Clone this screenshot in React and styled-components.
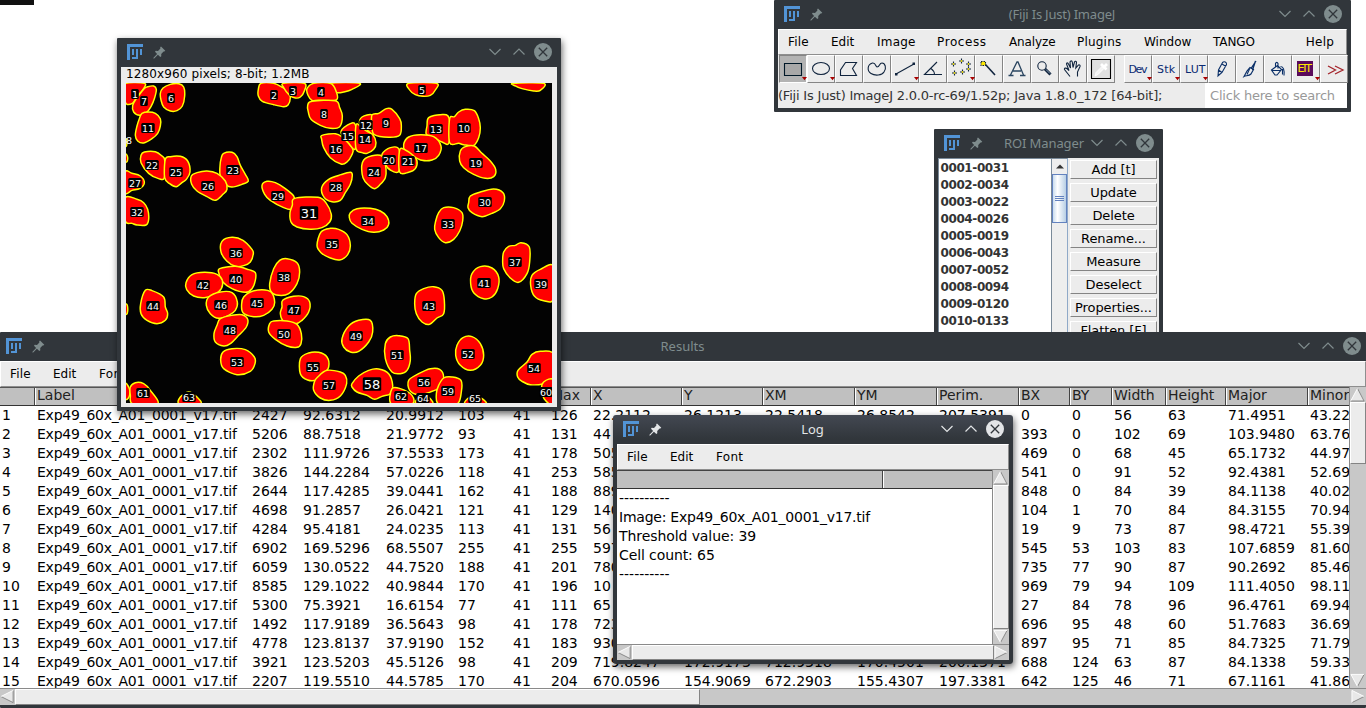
import React from "react";
import styled, { createGlobalStyle, css } from "styled-components";

const GlobalStyle = createGlobalStyle`
  * { box-sizing: border-box; }
  html, body { margin: 0; padding: 0; background: #fff; overflow: hidden; }
`;

const Desktop = styled.div`
  position: relative;
  width: 1366px;
  height: 708px;
  overflow: hidden;
  background: #fff;
  color: #000;
  font-family: "DejaVu Sans", sans-serif;
  font-size: 13px;
  white-space: pre;
`;

const ScreenCorner = styled.div`
  width: 34px;
  height: 5px;
  background: #111;
`;

/* ---------- window frame ---------- */

const Frame = styled.section`
  position: absolute;
  left: ${(p) => p.$x}px;
  top: ${(p) => p.$y}px;
  width: ${(p) => p.$w}px;
  height: ${(p) => p.$h}px;
  display: flex;
  flex-direction: column;
  padding: 0 ${(p) => p.$edge ?? 4}px ${(p) => p.$bottom ?? 4}px;
  background: #31363b;
  border-radius: ${(p) => (p.$active ? 3 : 1)}px;
  box-shadow: ${(p) => (p.$shadow ? "1px 3px 7px rgba(0, 0, 0, 0.6)" : "none")};
  ${(p) => p.$active && css`background: linear-gradient(#434852 0, #31363b 24px);`}
`;

const TitleBar = styled.header`
  flex: 0 0 29px;
  display: flex;
  align-items: center;
  padding: 0 ${(p) => p.$right ?? 5}px 1px ${(p) => p.$left ?? 6}px;
  color: ${(p) => (p.$active ? "#e3e5e7" : "#7f8c8d")};
`;

const TitleText = styled.h1`
  flex: 1;
  margin: 0;
  padding-left: ${(p) => p.$shift ?? 0}px;
  text-align: center;
  font: 400 13px/28px "Noto Sans", sans-serif;
  letter-spacing: ${(p) => p.$track ?? 0}px;
`;

const WindowButtons = styled.div`
  display: flex;
  align-items: center;
  gap: 12px;
  svg:last-child { margin-left: -3px; }
`;

const PinSlot = styled.span`
  display: flex;
  margin-left: 9px;
`;

const Content = styled.div`
  flex: 1;
  min-height: 0;
  display: flex;
  flex-direction: column;
  background: #ececec;
`;

const FijiLogo = () => (
  <svg width="17" height="17" viewBox="0 0 17 17" fill="#5294d6" shapeRendering="crispEdges">
    <path d="M0 0H16V3H3V16H0Z" />
    <path d="M5 5H7V11H5Z" />
    <path d="M9 5H11V15H5V13H9Z" />
    <path d="M13 5H15V11H13Z" />
  </svg>
);

const Pin = () => (
  <svg width="13" height="13" viewBox="0 0 13 13" fill="currentColor">
    <path d="M8 .5 12.3 4.8 11.3 5.6 10.6 5.4 8.2 8 8.3 10.2 7.3 11 4.9 8.8 1.2 12.4.4 12.4.5 11.7 4.1 8 2 5.7 2.7 4.8 5 4.9 7.4 2.4 7.2 1.3Z" />
  </svg>
);

const Chevron = ({ up }) => (
  <svg width="12" height="8" viewBox="0 0 12 8" fill="none" stroke="currentColor" strokeWidth="1.2">
    <path d={up ? "M.5 6.5 6 1 11.5 6.5" : "M.5 1 6 6.5 11.5 1"} />
  </svg>
);

const CloseButton = () => (
  <svg width="18" height="18" viewBox="0 0 18 18">
    <circle cx="9" cy="9" r="9" fill="currentColor" />
    <path d="M4.8 4.8 13.2 13.2M13.2 4.8 4.8 13.2" stroke="#31363b" strokeWidth="1.3" />
  </svg>
);

function Window({ title, active, titleShift, titleTrack, left, right, children, ...frame }) {
  return (
    <Frame $active={active} {...frame}>
      <TitleBar $active={active} $left={left} $right={right}>
        <FijiLogo />
        <PinSlot><Pin /></PinSlot>
        <TitleText $shift={titleShift} $track={titleTrack}>{title}</TitleText>
        <WindowButtons>
          <Chevron />
          <Chevron up />
          <CloseButton />
        </WindowButtons>
      </TitleBar>
      <Content>{children}</Content>
    </Frame>
  );
}

const MenuBar = styled.nav`
  flex: 0 0 26px;
  display: flex;
  padding: 0 12px 0 9px;
  border: 1px solid #fff;
  border-bottom-color: #8e8e8e;
  border-right-color: #8e8e8e;
  background: #ececec;
  font-size: 12px;
  line-height: 24px;
`;

const MenuItem = styled.span`
  flex: 0 0 ${(p) => (p.$w ? p.$w + "px" : "auto")};
  margin-left: ${(p) => (p.$last ? "auto" : 0)};
  letter-spacing: ${(p) => p.$track ?? 0}px;
`;

const TextMenus = () => (
  <MenuBar>
    <MenuItem $w={43} $track={0.2}>File</MenuItem>
    <MenuItem $w={46}>Edit</MenuItem>
    <MenuItem $track={0.3}>Font</MenuItem>
  </MenuBar>
);

const MAIN_MENUS = [
  ["File", 43, 0.2],
  ["Edit", 46, 0],
  ["Image", 60, 0.2],
  ["Process", 72, 0.6],
  ["Analyze", 68, -0.1],
  ["Plugins", 67, 0.2],
  ["Window", 69, 0],
  ["TANGO", 60, -0.1],
];

/* ---------- main toolbar window ---------- */

const ToolRow = styled.div`
  flex: 0 0 28px;
  display: flex;
  padding-left: 1px;
`;

const ToolButton = styled.button`
  flex: 0 0 28px;
  height: 28px;
  margin: 0 ${(p) => (p.$gapAfter ? 9 : 0)}px 0 0;
  padding: 0;
  border: 1px solid #fff;
  border-right: 1px solid #858585;
  border-bottom: 1px solid #858585;
  background: ${(p) => (p.$pressed ? "#b3b3b3" : "#ececec")};
  ${(p) => p.$pressed && css`border-color: #858585 #fff #fff #858585;`}
`;

const ToolGlyph = styled.svg`
  display: block;
  width: 26px;
  height: 26px;
  fill: none;
  stroke: #10243e;
  stroke-width: 1.1;
  overflow: visible;
  text { fill: #0a2a72; stroke: none; font: 11px "DejaVu Sans", sans-serif; }
`;

const More = () => <path d="M22 21h5l-2.5 3.2z" fill="#a80000" stroke="none" />;

const TOOLS = [
  { id: "rect", pressed: true, more: true, art: <path d="M4.500 7.500H21.500V19.500H4.500Z" stroke="#001828" fill="#a8a8a8" /> },
  { id: "oval", more: true, art: <ellipse cx="13" cy="12.500" rx="8.500" ry="6" /> },
  { id: "polygon", art: <path d="M9.500 6.500H20.500L16.500 12.500 20.500 19.500H4.500V14Z" /> },
  { id: "freehand", art: <path d="M8.500 7C3 8.500 3 15 7 17.500 11 20 18 19.500 20 16 23 12 21 7 18 7 15 7 16 11 13 11 11.500 11 12 6.500 8.500 7Z" /> },
  { id: "line", more: true, art: <><path d="M4 18 22 8" /><path d="M3 17h2.500v2.500H3zM20.500 6.500H23V9H20.500z" fill="#10243e" stroke="none" /></> },
  { id: "angle", art: <path d="M17 6 4.500 18.500H22M11 12.500Q14.500 15 14.500 18.500" /> },
  {
    id: "points", more: true,
    art: (
      <>
        {[[5, 8], [13, 5], [20, 8], [6, 17], [14, 16], [20, 13]].map(([x, y]) => (
          <g key={x + "-" + y}>
            <path d={`M${x - 2} ${y}h5M${x + 0.5} ${y - 2.5}v5`} />
            <path d={`M${x} ${y - 0.5}h1v1h-1z`} stroke="#ffe900" strokeWidth="0.8" />
          </g>
        ))}
      </>
    ),
  },
  { id: "wand", art: <><path d="M9 8 19 19" strokeWidth="1.6" /><path d="M5 5.500H9.500V9.500H5Z" fill="#ffe900" strokeDasharray="1.500 1" /></> },
  { id: "text", art: <path d="M6.500 19 13 6H14L19.500 19M4.500 19.500H9.500M16 19.500H21.500M9 15H17" strokeWidth="1.3" stroke="#2a4560" /> },
  { id: "magnify", art: <><circle cx="10" cy="10" r="4.200" /><path d="M13 13 18.500 18.500" strokeWidth="3" /><path d="M14 13.500 18 17.500" stroke="#a6bdd0" strokeWidth=".8" /></> },
  { id: "hand", art: <path d="M10 20.500 4.500 13.500C4 12 6 11.500 7.500 13L9 14.500 6.500 8C6.500 6.500 8 6.500 8.500 8L10.500 12 10 6C10.500 4.500 12 4.500 12.300 6L13 11.500 14.500 6C15 4.800 16.500 5.200 16.500 6.500L15.800 12 18.500 9C19.500 8.500 20.500 9.200 20 10.500L17.500 16V20.500" /> },
  {
    id: "picker", gapAfter: true,
    art: (
      <>
        <path d="M3.500 3.500H22.500V22.500H3.500Z" fill="#e0e0e0" stroke="#000" />
        <path d="M7 20 8 16.500 14 10.500 16 12.500 10 18.500Z" fill="#f4f4f4" stroke="#fff" strokeWidth="0.8" />
        <path d="M13 8 18.500 13.500M16 11 19 8" stroke="#fff" strokeWidth="2.800" />
      </>
    ),
  },
  { id: "dev", more: true, art: <text x="3.500" y="16.500" textLength="19">Dev</text> },
  { id: "stk", more: true, art: <text x="4" y="16.500" textLength="18">Stk</text> },
  { id: "lut", more: true, art: <text x="4" y="16.500" textLength="20.500">LUT</text> },
  { id: "pencil", art: <path d="M9 20 9.500 14 13.500 6.500C15 5 18 6 17.500 8.500L13 16.500ZM9.500 14 13 16.500M13 8 17 10.500M9 20 10.500 18" stroke="#0a2f68" /> },
  { id: "brush", art: <><path d="M19 5 14 12.500M18.500 5 15.500 14" stroke="#0a2f68" strokeWidth="1.300" /><path d="M13 11.500 16.500 13.500 14 18C12 20 9 19.500 7 20.500L10 15Z" stroke="#0a2f68" strokeWidth="1.200" /><path d="M12.500 13 10 18.500" stroke="#0a2f68" /></> },
  { id: "bucket", art: <path d="M6.500 14 12.500 9.500 16.500 13.500 12 19H10ZM7 14.500H16M10.500 11V7.500C11 6 12.500 6 13 7.500V12.500M15.500 10.500C18.500 10.500 19.500 14 19 19.500M17.500 13V18.500" stroke="#0a2f68" /> },
  { id: "ett", more: true, art: <><path d="M4 5H20V20H4Z" fill="#5a0a5a" stroke="none" /><text x="4.500" y="16" textLength="14.500"><tspan fill="#ffe600">ETT</tspan></text></> },
  { id: "overflow", art: <path d="M7 10 14.500 14 7 18M14 10 22 14 14 18" stroke="#a4252b" strokeWidth="1.300" /> },
];

const StatusRow = styled.div`
  flex: 1;
  display: flex;
  font-size: 13px;
  line-height: 25px;
  color: #333;
  letter-spacing: -0.2px;
`;

const StatusText = styled.span`
  flex: 0 0 427px;
`;

const SearchField = styled.span`
  flex: 1;
  padding-left: 5px;
  background: #fff;
  color: #999;
`;

/* ---------- ROI manager ---------- */

const RoiBody = styled.div`
  flex: 1;
  min-height: 0;
  display: flex;
  overflow: hidden;
`;

const RoiList = styled.ul`
  flex: 0 0 113px;
  margin: 0;
  padding: 1px 0 0 1.5px;
  list-style: none;
  background: #fff;
  border: solid #7a8a99;
  border-width: 1px 0 0 1px;
  color: #333;
  font-weight: 700;
  font-size: 12px;
  line-height: 17px;
  letter-spacing: -0.4px;
`;

const RoiScroll = styled.div`
  flex: 0 0 17px;
  display: flex;
  flex-direction: column;
  border: 1px solid #7a8a99;
  border-bottom-width: 0;
  border-right-color: #8fa9c8;
  background: #eee;
`;

const RoiArrow = styled.div`
  flex: 0 0 15px;
  display: flex;
  align-items: center;
  justify-content: center;
`;

const RoiThumb = styled.div`
  flex: 0 0 49px;
  display: flex;
  flex-direction: column;
  align-items: center;
  justify-content: center;
  gap: 1px;
  border: 1px solid #6382bf;
  background: linear-gradient(90deg, #c9dcee, #fff 35%, #b8cfe5);
`;

const GripLine = styled.i`
  width: 9px;
  height: 1px;
  background: #6382bf;
`;

const RoiButtons = styled.div`
  flex: 1;
  display: flex;
  flex-direction: column;
  gap: 4px;
  padding: 2px 2px 0 2px;
`;

const RoiButton = styled.button`
  flex: 0 0 19px;
  padding: 0;
  border: 1px solid;
  border-color: #fff #848484 #848484 #fff;
  background: #ececec;
  color: #000;
  font: 13px/17px "DejaVu Sans", sans-serif;
  letter-spacing: -0.1px;
`;

const ROIS = ["0001-0031", "0002-0034", "0003-0022", "0004-0026", "0005-0019", "0006-0043", "0007-0052", "0008-0094", "0009-0120", "0010-0133"];
const ROI_ACTIONS = ["Add [t]", "Update", "Delete", "Rename...", "Measure", "Deselect", "Properties...", "Flatten [F]"];

/* ---------- classic scroll bars ---------- */

const Track = styled.div`
  display: flex;
  flex: 0 0 ${(p) => p.$size}px;
  flex-direction: ${(p) => (p.$vertical ? "column" : "row")};
  border: 0 solid #8a8a8a;
  border-top-width: ${(p) => (p.$vertical ? 0 : 1)}px;
  border-left-width: ${(p) => (p.$vertical ? 1 : 0)}px;
  background: #c8c8c8;
`;

const Thumb = styled.div`
  flex: ${(p) => (p.$length ? `0 0 ${p.$length}px` : 1)};
  border: 1px solid;
  border-color: #fff #848484 #848484 #fff;
  background: #ececec;
`;

const Spacer = styled.div`
  flex: 1;
`;

const ARROWS = {
  up: ["M8 1 15 14H1Z", "M1 14.500H15L8 1", "M1 14 8 1"],
  down: ["M1 1H15L8 14Z", "M15 1 8 14", "M8 14 1 1H15"],
  left: ["M14 1V14L1 7.500Z", "M14 1V14L1 7.500", "M1 7.500 14 1"],
  right: ["M1 1V14L14 7.500Z", "M1 14 14 7.500", "M1 14V1L14 7.500"],
};

const Arrow = ({ dir }) => (
  <svg width="15" height="15" viewBox="0 0 16 15" fill="none" strokeWidth="1">
    <path d={ARROWS[dir][0]} fill="#e8e8e8" />
    <path d={ARROWS[dir][1]} stroke="#848484" />
    <path d={ARROWS[dir][2]} stroke="#fff" />
  </svg>
);

/* ---------- results table ---------- */

const Pane = styled.div`
  flex: 1;
  min-height: 0;
  display: flex;
`;

const COLS = [35, 215, 51, 83, 72, 55, 38, 42, 91, 81, 92, 82, 82, 51, 42, 54, 60, 82, 42];

const Sheet = styled.div`
  flex: 1;
  min-width: 0;
  overflow: hidden;
  background: #fff;
  font-size: 14px;
`;

const SheetRow = styled.div`
  display: grid;
  grid-template-columns: ${COLS.map((c) => c + "px").join(" ")};
  height: 19px;
  line-height: 19px;
`;

const HeadRow = styled(SheetRow)`
  border-top: 1px solid #555;
  border-bottom: 1px solid #333;
  line-height: 15px;
  background: #c0c0c0;
  color: #222;
`;

const Cell = styled.span`
  padding-left: 2px;
  overflow: hidden;
  letter-spacing: ${(p) => p.$track ?? 0}px;
`;

const HeadCell = styled.span`
  padding-left: 1px;
  overflow: hidden;
  border-left: ${(p) => (p.$first ? 0 : 1)}px solid #fff;
  box-shadow: ${(p) => (p.$first ? "none" : "-1px 0 #444")};
`;

const HEADINGS = ["", "Label", "Area", "Mean", "StdDev", "Mode", "Min", "Max", "X", "Y", "XM", "YM", "Perim.", "BX", "BY", "Width", "Height", "Major", "Minor"];
const FILE = "Exp49_60x_A01_0001_v17.tif";
const DATA = [
  "2427 92.6312 20.9912 103 41 126 22.2112 26.1213 22.5418 26.8542 207.5391 0 0 56 63 71.4951 43.22",
  "5206 88.7518 21.9772 93 41 131 44 - - - - 393 0 102 69 103.9480 63.76",
  "2302 111.9726 37.5533 173 41 178 505 - - - - 469 0 68 45 65.1732 44.97",
  "3826 144.2284 57.0226 118 41 253 585 - - - - 541 0 91 52 92.4381 52.69",
  "2644 117.4285 39.0441 162 41 188 889 - - - - 848 0 84 39 84.1138 40.02",
  "4698 91.2857 26.0421 121 41 129 140 - - - - 104 1 70 84 84.3155 70.94",
  "4284 95.4181 24.0235 113 41 131 56 - - - - 19 9 73 87 98.4721 55.39",
  "6902 169.5296 68.5507 255 41 255 597 - - - - 545 53 103 83 107.6859 81.60",
  "6059 130.0522 44.7520 188 41 201 780 - - - - 735 77 90 87 90.2692 85.46",
  "8585 129.1022 40.9844 170 41 196 10 - - - - 969 79 94 109 111.4050 98.11",
  "5300 75.3921 16.6154 77 41 111 65 - - - - 27 84 78 96 96.4761 69.94",
  "1492 117.9189 36.5643 98 41 178 723 - - - - 696 95 48 60 51.7683 36.69",
  "4778 123.8137 37.9190 152 41 183 930 - - - - 897 95 71 85 84.7325 71.79",
  "3921 123.5203 45.5126 98 41 209 719.8247 172.9173 712.9318 170.4501 200.1371 688 124 63 87 84.1338 59.33",
  "2207 119.5510 44.5785 170 41 204 670.0596 154.9069 672.2903 155.4307 197.3381 642 125 46 71 67.1161 41.86",
].map((line, i) => [String(i + 1), FILE, ...line.split(" ").map((v) => (v === "-" ? "" : v))]);

/* ---------- log ---------- */

const LogPane = styled.div`
  flex: 1;
  background: #fff;
`;

const LogHead = styled.div`
  display: flex;
  height: 19px;
  border-top: 1px solid #444;
  border-bottom: 1px solid #333;
  background: #c0c0c0;
`;

const LogHeadCell = styled.span`
  flex: 0 0 267px;
  border-right: 1px solid #fff;
  box-shadow: inset -1px 0 #444;
`;

const LogLine = styled.div`
  height: 19px;
  padding-left: 2px;
  font-size: 14px;
  line-height: 19px;
  letter-spacing: ${(p) => p.$track ?? 0}px;
`;

const LOG = [
  ["----------", 0],
  ["Image: " + FILE, -0.24],
  ["Threshold value: 39", -0.08],
  ["Cell count: 65", -0.1],
  ["----------", 0],
];

/* ---------- microscopy image ---------- */

const ImageInfo = styled.div`
  flex: 0 0 16px;
  padding-left: 5px;
  font-size: 12px;
  line-height: 14px;
  letter-spacing: 0.12px;
`;

const ImageCanvas = styled.svg`
  display: block;
  width: 426px;
  height: 320px;
  margin-left: 5px;
  background: #030303;
  text { fill: #fff; text-anchor: middle; font-family: "DejaVu Sans", sans-serif; }
`;

// Cell outlines, grouped by image quadrant; units are thirds of a pixel.
const QUADRANTS = [
  {
    x: -9, y: -47,
    cells: [
      "27,142 82,142 80,158 66,175 58,186 46,202 27,202 22,170",
      "92,152 110,150 118,160 113,185 102,212 88,230 68,238 50,228 47,208 58,188 72,170 82,157",
      "160,145 185,143 200,153 203,180 196,210 180,224 160,225 140,213 132,192 130,172 138,156",
      "75,232 95,228 115,232 130,248 130,270 122,292 105,308 80,321 62,315 55,298 60,270 67,248",
      "432,142 470,142 498,155 514,165 520,185 513,207 500,212 470,206 436,196 424,180 424,160",
      "500,142 562,142 562,165 550,183 535,186 518,178 500,155",
      "640,142 728,142 705,160 680,168 660,170 648,158",
      "590,142 640,142 657,165 658,192 605,193 585,193 573,178 570,158",
      "585,196 655,194 668,215 676,240 668,272 640,277 610,268 582,250 574,228 572,208",
      "82,348 115,347 135,360 143,372 142,425 125,428 95,412 72,380 72,358",
      "145,370 160,362 190,361 212,375 219,408 208,430 195,440 178,452 158,443 143,425",
      "320,352 345,349 360,362 370,388 385,415 394,435 375,445 345,453 328,447 310,420 309,390 313,365",
      "240,410 270,405 300,412 325,435 330,460 318,475 295,493 270,482 240,465 224,445 223,420",
      "25,408 45,412 70,420 82,440 68,458 45,463 25,470",
      "25,485 60,490 80,500 92,520 95,550 87,567 60,567 45,562 25,555",
      "435,448 450,436 475,440 505,458 530,480 533,500 525,520 500,515 460,493 443,475",
      "533,487 603,484 628,502 643,535 638,558 615,575 580,580 540,573 522,558 519,530 526,508",
      "615,298 655,293 675,303 707,338 704,358 690,378 672,384 640,365 620,335 614,310",
      "614,455 635,430 672,416 700,409 706,418 700,445 685,470 670,493 645,497 622,485",
      "25,355 31,360 31,375 25,377",
      "25,308 29,312 29,328 25,330",
    ],
  },
  {
    x: 211, y: -47,
    cells: [
      "215,142 298,142 295,162 280,178 258,181 235,176 218,162",
      "529,142 620,142 610,163 590,165 555,158 535,150",
      "75,243 105,237 110,265 110,295 88,280 68,262",
      "105,237 125,232 148,218 165,220 188,248 193,268 188,298 155,304 112,296 105,270",
      "12,290 30,268 55,266 55,338 35,322",
      "57,268 72,272 88,285 108,297 117,320 110,340 90,352 75,350 57,338",
      "270,270 275,245 310,236 336,246 336,320 315,318 290,305 268,295",
      "338,248 352,242 365,228 385,220 412,224 425,248 430,275 425,305 410,328 380,326 365,322 338,320",
      "200,325 215,303 250,296 290,302 312,330 305,358 285,372 255,373 225,358 205,345",
      "135,355 160,335 186,340 186,405 160,402 145,385",
      "188,342 205,342 228,358 240,375 235,398 215,409 188,408",
      "85,367 105,359 130,358 140,368 147,398 145,425 130,445 112,458 92,445 78,425 74,400 76,380",
      "370,345 385,332 412,330 435,352 460,375 476,400 470,422 445,427 410,415 380,395 368,375",
      "395,500 400,480 430,468 470,459 498,470 502,495 490,518 465,532 435,542 405,530 393,515",
      "40,530 60,518 100,517 130,525 150,542 155,565 140,582 110,589 75,580 45,562 37,545",
      "305,530 320,515 350,515 375,530 377,555 368,585 350,610 325,620 305,605 293,580 296,555",
    ],
  },
  {
    x: -9, y: 139,
    cells: [
      "612,30 640,19 665,22 690,38 700,70 692,98 668,114 640,108 612,92 600,70",
      "315,58 345,46 378,55 405,82 409,95 400,120 380,131 355,133 330,118 312,90",
      "308,140 355,133 395,143 415,152 415,175 405,200 385,211 345,200 315,178 306,155",
      "470,140 488,115 510,110 540,122 548,150 540,185 515,215 485,220 463,210 458,185",
      "207,182 225,158 262,151 300,157 316,175 313,200 292,218 262,227 230,222 209,203",
      "275,225 310,210 345,212 361,240 355,265 335,280 305,289 280,275 268,250",
      "380,225 400,210 435,203 462,210 473,240 465,262 440,280 410,284 378,272 374,245",
      "497,235 530,223 560,224 578,240 575,270 555,295 535,306 500,298 490,275 495,255",
      "85,205 105,206 140,225 145,255 152,275 145,295 120,305 90,295 72,275 71,245",
      "310,290 345,280 375,278 392,292 388,315 365,340 340,365 320,372 295,360 291,335 300,310",
      "458,305 470,297 510,297 540,307 553,335 552,365 540,376 510,372 475,352 455,330",
      "318,390 345,380 385,383 412,405 414,425 400,448 360,458 320,440 311,415",
      "25,485 37,500 36,525 25,530",
      "40,495 55,482 80,485 100,505 122,546 48,546 40,520",
      "188,546 190,525 215,510 240,525 250,546",
      "550,410 575,393 605,391 630,405 635,435 618,460 600,474 572,474 550,455",
      "602,465 630,445 670,450 685,460 689,485 670,522 640,535 610,528 590,505 592,480",
      "25,248 31,250 31,273 25,275",
    ],
  },
  {
    x: 211, y: 139,
    cells: [
      "500,90 515,73 535,70 552,62 577,75 578,120 570,155 545,181 520,168 500,140 497,115",
      "405,155 430,134 465,138 485,165 482,200 465,225 440,230 410,212 401,185",
      "650,133 610,142 585,160 581,190 592,222 620,236 650,230",
      "238,215 260,200 290,194 315,205 322,235 320,275 300,288 278,307 255,300 238,275 233,245",
      "15,350 35,312 65,295 100,295 107,330 95,360 65,388 40,390 20,375",
      "145,365 160,345 185,341 213,350 218,385 220,415 210,445 190,455 165,450 145,410",
      "360,370 378,347 405,344 430,365 440,400 430,430 400,445 370,430 356,400",
      "543,445 570,420 585,397 610,388 650,396 650,470 620,485 580,488 555,478 542,465",
      "650,475 620,480 614,505 625,535 650,546",
      "45,485 65,462 95,445 125,441 155,455 167,490 160,515 135,523 113,532 90,520 60,510 45,495",
      "215,475 245,455 280,440 308,442 320,465 310,495 280,510 245,518 218,505",
      "305,490 320,468 345,465 372,475 373,510 360,546 305,546 298,515",
      "165,500 190,500 225,520 225,546 163,546",
      "237,546 245,525 262,518 280,530 285,546",
      "385,546 398,525 420,520 448,546",
    ],
  },
];

const LABELS = [
  [1, 135, 94], [7, 144, 101], [6, 171, 98], [11, 148, 128], [22, 152, 165], [25, 176, 172], [23, 233, 170], [26, 208, 186],
  [27, 135, 183], [32, 137, 212], [2, 274, 95], [3, 293, 91], [4, 321, 92], [8, 324, 114], [5, 422, 90], [9, 386, 123],
  [12, 366, 125], [15, 348, 136], [14, 365, 139], [16, 336, 149], [13, 436, 129], [10, 464, 128], [17, 421, 148], [20, 389, 160],
  [21, 408, 161], [24, 374, 172], [19, 476, 163], [28, 336, 187], [29, 278, 196], [30, 485, 202], [31, 309, 213, 13], [34, 368, 221],
  [33, 448, 224], [35, 332, 244], [36, 236, 253], [38, 284, 277], [37, 515, 262], [40, 236, 279], [42, 203, 285], [41, 484, 283],
  [39, 541, 284], [45, 257, 303], [46, 221, 305], [47, 294, 310], [43, 429, 306], [44, 153, 306], [48, 230, 330], [50, 284, 334],
  [49, 356, 336], [51, 397, 355], [52, 468, 354], [53, 237, 362], [55, 313, 367], [54, 534, 368], [57, 329, 385], [58, 372, 384, 13],
  [56, 424, 382], [59, 448, 391], [61, 143, 393], [62, 401, 396], [60, 546, 392], [63, 189, 397], [64, 423, 398], [65, 475, 398],
];

function outline(spec) {
  const p = spec.split(" ").map((s) => s.split(",").map(Number));
  const n = p.length;
  const at = (i) => p[(i + n) % n];
  const k = 1 / 6;
  let d = `M${p[0]}`;
  for (let i = 0; i < n; i++) {
    const [a, b, c, e] = [at(i - 1), at(i), at(i + 1), at(i + 2)];
    d += `C${b[0] + (c[0] - a[0]) * k},${b[1] + (c[1] - a[1]) * k} ${c[0] - (e[0] - b[0]) * k},${c[1] - (e[1] - b[1]) * k} ${c[0]},${c[1]}`;
  }
  return d + "Z";
}

function CellImage() {
  return (
    <ImageCanvas viewBox="0 0 426 320">
      <g fill="#f00" stroke="#ff0" strokeWidth="4.4">
        {QUADRANTS.map((q) => (
          <g key={q.x + "," + q.y} transform={`translate(${q.x} ${q.y}) scale(.33333)`}>
            {q.cells.map((c) => <path key={c} d={outline(c)} />)}
          </g>
        ))}
      </g>
      {LABELS.map(([n, ax, ay, size = 9.5]) => {
        const x = ax - 126;
        const y = ay - 83;
        const w = (n > 9 ? 1.42 : 0.8) * size;
        const h = size + 0.5;
        return (
          <g key={n}>
            <rect x={x - w / 2} y={y - h / 2} width={w} height={h} rx="1.5" fill="#000" />
            <text x={x} y={y + size * 0.37} fontSize={size}>{n}</text>
          </g>
        );
      })}
      <text x="3" y="61" fontSize="9.5">8</text>
    </ImageCanvas>
  );
}

export default function App() {
  return (
    <Desktop>
      <GlobalStyle />
      <ScreenCorner />

      <Window title="(Fiji Is Just) ImageJ" titleShift={22} titleTrack={-0.2} $x={774} $y={0} $w={577} $h={112}>
        <MenuBar>
          {MAIN_MENUS.map(([label, width, track]) => <MenuItem key={label} $w={width} $track={track}>{label}</MenuItem>)}
          <MenuItem $last $track={0.2}>Help</MenuItem>
        </MenuBar>
        <ToolRow>
          {TOOLS.map((t) => (
            <ToolButton key={t.id} $pressed={t.pressed} $gapAfter={t.gapAfter}>
              <ToolGlyph viewBox="0 0 26 26">{t.art}{t.more && <More />}</ToolGlyph>
            </ToolButton>
          ))}
        </ToolRow>
        <StatusRow>
          <StatusText>(Fiji Is Just) ImageJ 2.0.0-rc-69/1.52p; Java 1.8.0_172 [64-bit];</StatusText>
          <SearchField>Click here to search</SearchField>
        </StatusRow>
      </Window>

      <Window title="ROI Manager" titleShift={14} titleTrack={-0.1} $x={934} $y={129} $w={229} $h={230}>
        <RoiBody>
          <RoiList>{ROIS.map((r) => <li key={r}>{r}</li>)}</RoiList>
          <RoiScroll>
            <RoiArrow><svg width="8" height="5" viewBox="0 0 8 5"><path d="M0 4.500 4 .5 8 4.500Z" fill="#333" /></svg></RoiArrow>
            <RoiThumb><GripLine /><GripLine /><GripLine /></RoiThumb>
          </RoiScroll>
          <RoiButtons>{ROI_ACTIONS.map((a) => <RoiButton key={a}>{a}</RoiButton>)}</RoiButtons>
        </RoiBody>
      </Window>

      <Window title="Results" titleShift={22} $x={0} $y={332} $w={1366} $h={376} $edge={0} $bottom={3}>
        <TextMenus />
        <Pane>
          <Sheet>
            <HeadRow>{HEADINGS.map((h, i) => <HeadCell key={i} $first={i === 0}>{h}</HeadCell>)}</HeadRow>
            {DATA.map((row) => (
              <SheetRow key={row[0]}>{row.map((v, i) => <Cell key={i} $track={i === 1 ? -0.24 : 0}>{v}</Cell>)}</SheetRow>
            ))}
          </Sheet>
          <Track $vertical $size={17}>
            <Arrow dir="up" />
            <Thumb $length={62} />
            <Spacer />
            <Arrow dir="down" />
          </Track>
        </Pane>
        <Track $size={17}>
          <Arrow dir="left" />
          <Thumb $length={685} />
          <Spacer />
          <Arrow dir="right" />
        </Track>
      </Window>

      <Window title="" $shadow $x={117} $y={38} $w={444} $h={373}>
        <ImageInfo>1280x960 pixels; 8-bit; 1.2MB</ImageInfo>
        <CellImage />
      </Window>

      <Window title="Log" active titleShift={22} $shadow $x={613} $y={415} $w={400} $h={249}>
        <TextMenus />
        <Pane>
          <LogPane>
            <LogHead><LogHeadCell /></LogHead>
            {LOG.map(([line, track], i) => <LogLine key={i} $track={track}>{line}</LogLine>)}
          </LogPane>
          <Track $vertical $size={17}>
            <Arrow dir="up" />
            <Thumb />
            <Arrow dir="down" />
          </Track>
        </Pane>
        <Track $size={16}>
          <Arrow dir="left" />
          <Thumb />
          <Arrow dir="right" />
        </Track>
      </Window>
    </Desktop>
  );
}
